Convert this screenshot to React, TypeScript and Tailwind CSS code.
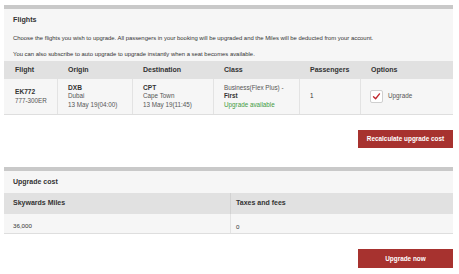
import React from 'react';

const flights = [
  {
    code: 'EK772',
    aircraft: '777-300ER',
    origin: { iata: 'DXB', city: 'Dubai', time: '13 May 19(04:00)' },
    dest: { iata: 'CPT', city: 'Cape Town', time: '13 May 19(11:45)' },
    fromClass: 'Business(Flex Plus) -',
    toClass: 'First',
    passengers: '1',
  },
];

const cols = 'grid grid-cols-[54px_75px_81px_86px_61px_1fr]';

export default function App() {
  return (
    <div className="min-h-screen bg-white font-['Liberation_Sans',Arial,sans-serif] text-[#333]">
      <div className="ml-[4px] w-[449px] pt-[5px]">
        {/* Flights panel */}
        <section className="border-t-[4px] border-[#c9c9c9] bg-[#f6f6f6] border-b border-b-[#dedede]">
          <div className="h-[52px] px-[9px]">
            <h2 className="pt-[7px] text-[7.2px] font-bold leading-[8px]">Flights</h2>
            <p className="mt-[11px] text-[5.9px] leading-[6px]">
              Choose the flights you wish to upgrade. All passengers in your booking will be upgraded and the Miles will be deducted from your account.
            </p>
            <p className="mt-[10px] text-[5.9px] leading-[6px]">
              You can also subscribe to auto upgrade to upgrade instantly when a seat becomes available.
            </p>
          </div>

          <div className={`${cols} h-[18px] items-center bg-[#e1e1e1] text-[7px] font-bold`}>
            <div className="pl-[11px]">Flight</div>
            <div className="pl-[10px]">Origin</div>
            <div className="pl-[10px]">Destination</div>
            <div className="pl-[10px]">Class</div>
            <div className="pl-[10px]">Passengers</div>
            <div className="pl-[10px]">Options</div>
          </div>

          {flights.map((f) => (
            <div key={f.code} className={`${cols} h-[35px] text-[6.3px] leading-[8.4px]`}>
              <div className="flex flex-col justify-center pl-[11px] border-r border-[#e3e3e3]">
                <span className="font-bold text-[6.6px]">{f.code}</span>
                <span className="text-[#555]">{f.aircraft}</span>
              </div>
              <div className="flex flex-col justify-center pl-[10px] border-r border-[#e3e3e3]">
                <span className="font-bold text-[6.6px]">{f.origin.iata}</span>
                <span className="text-[#555]">{f.origin.city}</span>
                <span className="text-[#555]">{f.origin.time}</span>
              </div>
              <div className="flex flex-col justify-center pl-[10px] border-r border-[#e3e3e3]">
                <span className="font-bold text-[6.6px]">{f.dest.iata}</span>
                <span className="text-[#555]">{f.dest.city}</span>
                <span className="text-[#555]">{f.dest.time}</span>
              </div>
              <div className="flex flex-col justify-center pl-[10px] border-r border-[#e3e3e3]">
                <span className="text-[#555]">{f.fromClass}</span>
                <span className="font-bold">{f.toClass}</span>
                <span className="text-[#3f9b3f]">Upgrade available</span>
              </div>
              <div className="flex items-center pl-[10px] border-r border-[#e3e3e3]">{f.passengers}</div>
              <div className="flex items-center pl-[9px] gap-[5px]">
                <span className="flex h-[13px] w-[13px] items-center justify-center rounded-[2px] border border-[#cfcfcf] bg-white">
                  <svg viewBox="0 0 12 12" className="h-[9px] w-[9px]">
                    <path d="M2 6.2 L4.8 9 L10 2.5" fill="none" stroke="#c0272d" strokeWidth="1.8" strokeLinecap="round" strokeLinejoin="round" />
                  </svg>
                </span>
                <span className="text-[#555]">Upgrade</span>
              </div>
            </div>
          ))}
        </section>

        <div className="mt-[15px] flex justify-end">
          <button className="h-[18px] w-[95px] bg-[#a7322f] text-[6.4px] font-bold text-white">
            Recalculate upgrade cost
          </button>
        </div>

        {/* Upgrade cost panel */}
        <section className="mt-[19px] border-t-[4px] border-[#c9c9c9] bg-[#f6f6f6] border-b border-b-[#dedede]">
          <div className="flex h-[22px] items-center px-[9px]">
            <h2 className="text-[7px] font-bold">Upgrade cost</h2>
          </div>
          <div className="grid grid-cols-[226px_1fr] h-[21px] items-center bg-[#e1e1e1] text-[7px] font-bold">
            <div className="pl-[9px]">Skywards Miles</div>
            <div className="pl-[5px] h-full flex items-center border-l border-[#d2d2d2]">Taxes and fees</div>
          </div>
          <div className="grid grid-cols-[226px_1fr] h-[19px] text-[6.2px]">
            <div className="flex items-end pb-[3px] pl-[9px]">36,000</div>
            <div className="flex items-end pb-[2px] pl-[5px] border-l border-[#e3e3e3]">0</div>
          </div>
        </section>

        <div className="mt-[15px] flex justify-end">
          <button className="h-[19px] w-[95px] bg-[#a7322f] text-[6.4px] font-bold text-white">
            Upgrade now
          </button>
        </div>
      </div>
    </div>
  );
}
